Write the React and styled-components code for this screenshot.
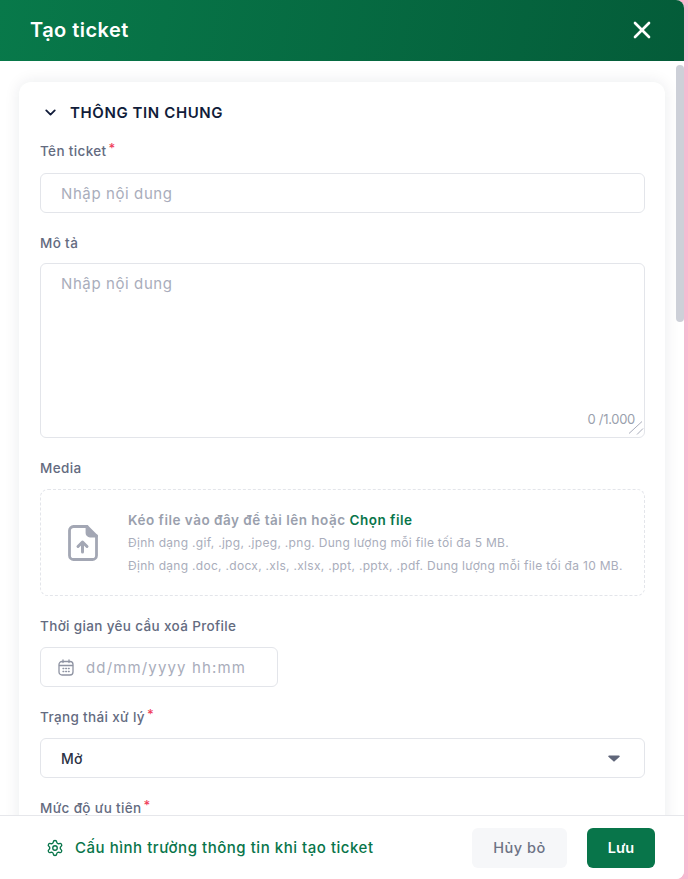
import React from "react";
import styled, { createGlobalStyle } from "styled-components";
import { X, ChevronDown, Settings } from "lucide-react";

const GlobalStyle = createGlobalStyle`
  html, body {
    margin: 0;
    padding: 0;
    background: #f7b9d0;
    font-family: Inter, "Noto Sans", sans-serif;
  }
  * {
    box-sizing: border-box;
  }
`;

const Page = styled.div`
  width: 688px;
  height: 879px;
  overflow: hidden;
  padding-right: 4px;
`;

const Modal = styled.div`
  height: 100%;
  display: flex;
  flex-direction: column;
  background: #fff;
  border-radius: 0 8px 8px 0;
  overflow: hidden;
  position: relative;
`;

const Header = styled.div`
  height: 61px;
  flex: none;
  display: flex;
  align-items: center;
  justify-content: space-between;
  padding: 0 30px 2px;
  background: linear-gradient(100deg, #08794a 0%, #045c39 100%);
  color: #fff;
`;

const Title = styled.div`
  font-size: 20px;
  font-weight: 600;
  letter-spacing: 0.45px;
`;

const CloseBtn = styled.div`
  display: flex;
  margin-right: -2px;
`;

const Body = styled.div`
  flex: 1;
  min-height: 0;
  overflow: hidden;
  padding: 21px 19px 0;
`;

const ScrollThumb = styled.div`
  position: absolute;
  top: 65px;
  right: 0;
  width: 8px;
  height: 257px;
  border-radius: 4px;
  background: #cdd0d8;
`;

const Card = styled.div`
  background: #fff;
  border-radius: 12px;
  box-shadow: 0 0 16px rgba(20, 30, 50, 0.09);
  padding: 16px 20px 40px 21px;
  width: 646px;
`;

const SectionHead = styled.div`
  display: flex;
  align-items: center;
  gap: 11px;
  height: 28px;
  margin-bottom: 15px;
  padding-left: 2px;
  color: #111c3a;
  font-size: 15px;
  font-weight: 600;
  letter-spacing: 0.6px;
`;

const Field = styled.div`
  display: flex;
  flex-direction: column;
  margin-bottom: 20px;
`;

const Label = styled.div`
  height: 20px;
  line-height: 20px;
  margin-bottom: ${(p) => p.$gap || 10}px;
  font-size: 13.5px;
  font-weight: 500;
  letter-spacing: 0.35px;
  color: #646b7f;
  white-space: nowrap;
`;

const Star = styled.span`
  color: #ef3f5c;
  font-size: 13px;
  margin-left: 2px;
  position: relative;
  top: -3px;
`;

const Input = styled.div`
  height: 40px;
  width: ${(p) => p.$width || "100%"};
  display: flex;
  align-items: center;
  gap: ${(p) => p.$gap || 11}px;
  padding: 0 20px 0 ${(p) => p.$padLeft || 20}px;
  border: 1px solid #e3e5ea;
  border-radius: 6px;
  font-size: 15px;
  color: #a9adbb;
  letter-spacing: ${(p) => p.$spacing || 0.6}px;
`;

const TextArea = styled.div`
  position: relative;
  height: 175px;
  padding: 10px 20px;
  border: 1px solid #e3e5ea;
  border-radius: 6px;
  font-size: 15px;
  line-height: 20px;
  color: #a9adbb;
  letter-spacing: 0.6px;
`;

const Counter = styled.span`
  position: absolute;
  right: 9px;
  bottom: 9px;
  font-size: 13px;
  line-height: 18px;
  letter-spacing: -0.3px;
  color: #9a9fad;
`;

const Grip = styled.svg`
  position: absolute;
  right: 0;
  bottom: 0;
`;

const Drop = styled.div`
  height: 107px;
  display: flex;
  align-items: center;
  gap: 29px;
  padding-left: 26px;
  border: 1px dashed #e3e5ea;
  border-radius: 8px;
`;

const DropText = styled.div`
  display: flex;
  flex-direction: column;
  gap: 3px;
`;

const DropTitle = styled.div`
  font-size: 13.5px;
  line-height: 20px;
  font-weight: 600;
  letter-spacing: 0.5px;
  color: #9a9fad;
`;

const ChooseFile = styled.span`
  color: #08754a;
`;

const DropHint = styled.div`
  font-size: 12px;
  line-height: 20px;
  color: #a9adbb;
  white-space: nowrap;
  letter-spacing: 0.3px;
`;

const Select = styled(Input)`
  justify-content: space-between;
  padding: 0 24px 0 20px;
  color: #2b3245;
  font-size: 14px;
  font-weight: 500;
`;

const Footer = styled.div`
  height: 64px;
  flex: none;
  display: flex;
  align-items: center;
  justify-content: space-between;
  padding: 0 29px 0 46px;
  background: #fff;
  border-top: 1px solid #e6e7eb;
`;

const ConfigLink = styled.div`
  display: flex;
  align-items: center;
  gap: 11px;
  font-size: 15px;
  font-weight: 500;
  color: #08754a;
  letter-spacing: 0.53px;
`;

const Actions = styled.div`
  display: flex;
  gap: 20px;
`;

const Button = styled.div`
  height: 40px;
  display: flex;
  align-items: center;
  justify-content: center;
  width: ${(p) => (p.$primary ? 68 : 95)}px;
  border-radius: 6px;
  font-size: 14.5px;
  font-weight: ${(p) => (p.$primary ? 600 : 500)};
  letter-spacing: ${(p) => (p.$primary ? 0 : 0.5)}px;
  background: ${(p) => (p.$primary ? "#08754a" : "#f6f7f9")};
  color: ${(p) => (p.$primary ? "#fff" : "#6d7385")};
`;

const FileUpIcon = () => (
  <svg width="32" height="38" viewBox="0 0 32 38" fill="none" stroke="#a3a7b4" strokeWidth="2.8" strokeLinecap="round" strokeLinejoin="round">
    <path d="M20 2.5H6.5A4 4 0 0 0 2.5 6.5v25a4 4 0 0 0 4 4h19a4 4 0 0 0 4-4V12z" />
    <path d="M20 2.5V9a3 3 0 0 0 3 3h6.5" fill="#a3a7b4" />
    <path d="M15.500 28v-10M11 22.500l4.500-4.500 4.500 4.500" strokeWidth="3" />
  </svg>
);

const CalendarIcon = () => (
  <svg width="16" height="17" viewBox="0 0 16 17" fill="none" stroke="#8e93a2" strokeWidth="1.3" strokeLinecap="round">
    <rect x="1" y="2.500" width="14" height="13.500" rx="3" />
    <path d="M1.500 6.500h13M5 1v2.500M11 1v2.500" />
    <path d="M5 9.500h.8M7.700 9.500h.8M10.400 9.500h.8M5 12.500h.8M7.700 12.500h.8M10.400 12.500h.8" />
  </svg>
);

const CaretIcon = () => (
  <svg width="12" height="7" viewBox="0 0 12 7">
    <path d="M1 0.500h10a.8.8 0 0 1 .6 1.300L6.600 6.300a.8.8 0 0 1-1.200 0L.4 1.800A.8.8 0 0 1 1 .5z" fill="#60667a" />
  </svg>
);

export default function App() {
  return (
    <>
      <GlobalStyle />
      <Page>
        <Modal>
          <Header>
            <Title>Tạo ticket</Title>
            <CloseBtn>
              <X size={28} strokeWidth={2.3} color="#fff" />
            </CloseBtn>
          </Header>
          <Body>
            <Card>
              <SectionHead>
                <ChevronDown size={17} strokeWidth={2.6} />
                THÔNG TIN CHUNG
              </SectionHead>
              <Field>
                <Label $gap={12}>
                  Tên ticket<Star>*</Star>
                </Label>
                <Input>Nhập nội dung</Input>
              </Field>
              <Field>
                <Label>Mô tả</Label>
                <TextArea>
                  Nhập nội dung
                  <Counter>0 /1.000</Counter>
                  <Grip width="15" height="16" viewBox="0 0 15 16" stroke="#a9adbb" strokeWidth="1">
                    <path d="M0 12.500L13 .5M8 13.500L14 7.500" />
                  </Grip>
                </TextArea>
              </Field>
              <Field>
                <Label $gap={11}>Media</Label>
                <Drop>
                  <FileUpIcon />
                  <DropText>
                    <DropTitle>
                      Kéo file vào đây để tải lên hoặc <ChooseFile>Chọn file</ChooseFile>
                    </DropTitle>
                    <DropHint>Định dạng .gif, .jpg, .jpeg, .png. Dung lượng mỗi file tối đa 5 MB.</DropHint>
                    <DropHint>Định dạng .doc, .docx, .xls, .xlsx, .ppt, .pptx, .pdf. Dung lượng mỗi file tối đa 10 MB.</DropHint>
                  </DropText>
                </Drop>
              </Field>
              <Field>
                <Label $gap={11}>Thời gian yêu cầu xoá Profile</Label>
                <Input $width="238px" $padLeft={17} $gap={12} $spacing={1.15}>
                  <CalendarIcon />
                  dd/mm/yyyy hh:mm
                </Input>
              </Field>
              <Field>
                <Label $gap={11}>
                  Trạng thái xử lý<Star>*</Star>
                </Label>
                <Select $spacing={0.1}>
                  Mở
                  <CaretIcon />
                </Select>
              </Field>
              <Field>
                <Label>
                  Mức độ ưu tiên<Star>*</Star>
                </Label>
              </Field>
            </Card>
          </Body>
          <Footer>
            <ConfigLink>
              <Settings size={18} strokeWidth={1.8} />
              Cấu hình trường thông tin khi tạo ticket
            </ConfigLink>
            <Actions>
              <Button>Hủy bỏ</Button>
              <Button $primary>Lưu</Button>
            </Actions>
          </Footer>
          <ScrollThumb />
        </Modal>
      </Page>
    </>
  );
}
